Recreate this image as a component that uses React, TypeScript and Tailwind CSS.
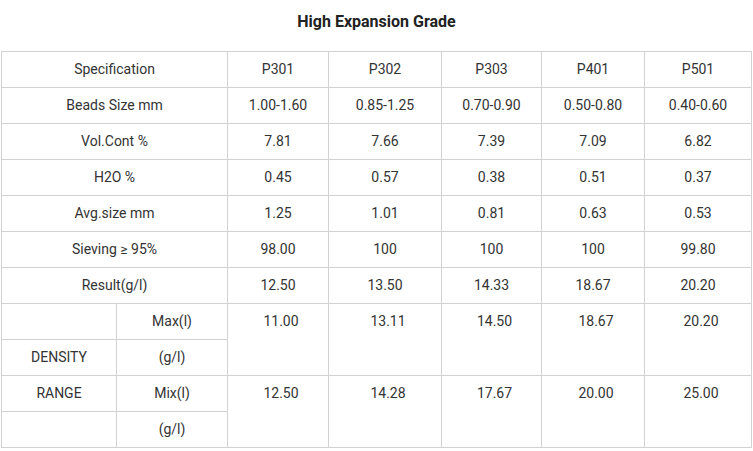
import React from 'react';

const COLS = ['P301', 'P302', 'P303', 'P401', 'P501'];

const ROWS: { label: string; values: string[] }[] = [
  { label: 'Beads Size mm', values: ['1.00-1.60', '0.85-1.25', '0.70-0.90', '0.50-0.80', '0.40-0.60'] },
  { label: 'Vol.Cont %', values: ['7.81', '7.66', '7.39', '7.09', '6.82'] },
  { label: 'H2O %', values: ['0.45', '0.57', '0.38', '0.51', '0.37'] },
  { label: 'Avg.size mm', values: ['1.25', '1.01', '0.81', '0.63', '0.53'] },
  { label: 'Sieving ≥ 95%', values: ['98.00', '100', '100', '100', '99.80'] },
  { label: 'Result(g/l)', values: ['12.50', '13.50', '14.33', '18.67', '20.20'] },
];

const MAX = ['11.00', '13.11', '14.50', '18.67', '20.20'];
const MIX = ['12.50', '14.28', '17.67', '20.00', '25.00'];

const cell = 'border border-[#d2d2d2] h-[36px] p-0 text-center align-middle leading-[35px]';
const tall = 'border border-[#d2d2d2] p-0 pl-[6px] text-center align-top leading-[35px]';

function App() {
  return (
    <div className="w-[753px] h-[451px] bg-white overflow-hidden font-['Roboto',sans-serif] text-[14px] text-[#333]">
      <h2 className="h-[45px] pt-[11px] text-center text-[16px] leading-[22px] font-bold text-[#222]">
        High Expansion Grade
      </h2>
      <table className="ml-[1px] mt-[6px] w-[750px] table-fixed border-collapse">
        <colgroup>
          <col className="w-[115px]" />
          <col className="w-[111px]" />
          <col className="w-[101px]" />
          <col className="w-[113px]" />
          <col className="w-[100px]" />
          <col className="w-[103px]" />
          <col className="w-[107px]" />
        </colgroup>
        <tbody>
          <tr>
            <td colSpan={2} className={cell}>Specification</td>
            {COLS.map(c => (
              <td key={c} className={cell}>{c}</td>
            ))}
          </tr>
          {ROWS.map(r => (
            <tr key={r.label}>
              <td colSpan={2} className={cell}>{r.label}</td>
              {r.values.map((v, i) => (
                <td key={i} className={cell}>{v}</td>
              ))}
            </tr>
          ))}
          <tr>
            <td className={cell}></td>
            <td className={cell}>Max(l)</td>
            {MAX.map((v, i) => (
              <td key={i} rowSpan={2} className={tall}>{v}</td>
            ))}
          </tr>
          <tr>
            <td className={cell}>DENSITY</td>
            <td className={cell}>(g/l)</td>
          </tr>
          <tr>
            <td className={cell}>RANGE</td>
            <td className={cell}>Mix(l)</td>
            {MIX.map((v, i) => (
              <td key={i} rowSpan={2} className={tall}>{v}</td>
            ))}
          </tr>
          <tr>
            <td className={cell}></td>
            <td className={cell}>(g/l)</td>
          </tr>
        </tbody>
      </table>
    </div>
  );
}

export default App;
